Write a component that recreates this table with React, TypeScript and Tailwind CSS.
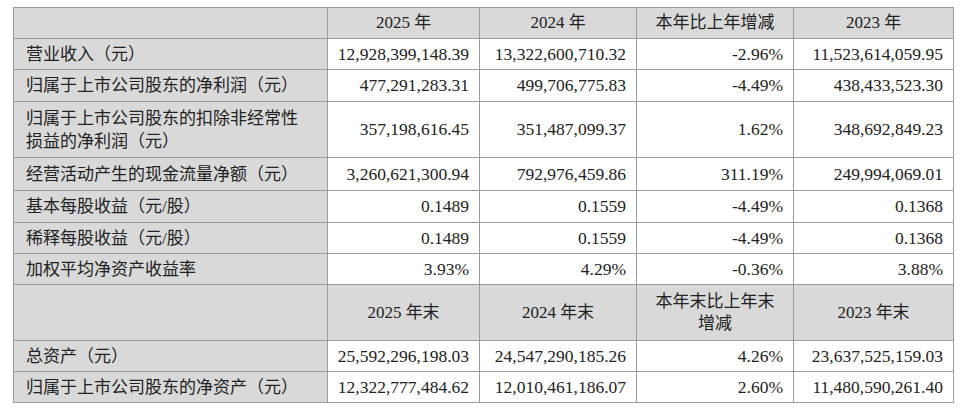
import React from 'react';

type Row = {
    label: React.ReactNode;
    values: string[];
    h: string;
};

const topRows: Row[] = [
    { label: '营业收入（元）', values: ['12,928,399,148.39', '13,322,600,710.32', '-2.96%', '11,523,614,059.95'], h: 'h-[31px]' },
    { label: '归属于上市公司股东的净利润（元）', values: ['477,291,283.31', '499,706,775.83', '-4.49%', '438,433,523.30'], h: 'h-[32px]' },
    {
        label: (
            <>
                归属于上市公司股东的扣除非经常性
                <br />
                损益的净利润（元）
            </>
        ),
        values: ['357,198,616.45', '351,487,099.37', '1.62%', '348,692,849.23'],
        h: 'h-[56px]',
    },
    { label: '经营活动产生的现金流量净额（元）', values: ['3,260,621,300.94', '792,976,459.86', '311.19%', '249,994,069.01'], h: 'h-[33px]' },
    { label: '基本每股收益（元/股）', values: ['0.1489', '0.1559', '-4.49%', '0.1368'], h: 'h-[32px]' },
    { label: '稀释每股收益（元/股）', values: ['0.1489', '0.1559', '-4.49%', '0.1368'], h: 'h-[31px]' },
    { label: '加权平均净资产收益率', values: ['3.93%', '4.29%', '-0.36%', '3.88%'], h: 'h-[31px]' },
];

const bottomRows: Row[] = [
    { label: '总资产（元）', values: ['25,592,296,198.03', '24,547,290,185.26', '4.26%', '23,637,525,159.03'], h: 'h-[31px]' },
    { label: '归属于上市公司股东的净资产（元）', values: ['12,322,777,484.62', '12,010,461,186.07', '2.60%', '11,480,590,261.40'], h: 'h-[31px]' },
];

const cell = 'border border-[#9c9c9c]';
const head = `${cell} bg-[#d9d9d9] text-center font-normal text-[17px] leading-[22px]`;

function BodyRow({ row }: { row: Row }) {
    return (
        <tr className={row.h}>
            <td className={`${cell} bg-[#d9d9d9] pl-[12px] text-left text-[17px] leading-[23px]`}>{row.label}</td>
            {row.values.map((v, i) => (
                <td key={i} className={`${cell} bg-white pr-[10px] text-right text-[17.5px]`}>
                    {v}
                </td>
            ))}
        </tr>
    );
}

export default function App() {
    return (
        <div className="min-h-screen bg-white pl-[13px] pt-[7px]">
            <table
                className="table-fixed border-collapse text-[#222] w-[940px]"
                style={{ fontFamily: '"Liberation Serif", "Noto Sans CJK SC", serif' }}
            >
                <colgroup>
                    <col className="w-[314px]" />
                    <col className="w-[152px]" />
                    <col className="w-[157px]" />
                    <col className="w-[157px]" />
                    <col className="w-[160px]" />
                </colgroup>
                <tbody>
                    <tr className="h-[31px]">
                        <th className={head}></th>
                        <th className={head}>2025 年</th>
                        <th className={head}>2024 年</th>
                        <th className={head}>本年比上年增减</th>
                        <th className={head}>2023 年</th>
                    </tr>
                    {topRows.map((r, i) => (
                        <BodyRow key={i} row={r} />
                    ))}
                    <tr className="h-[56px]">
                        <th className={head}></th>
                        <th className={head}>2025 年末</th>
                        <th className={head}>2024 年末</th>
                        <th className={head}>
                            本年末比上年末
                            <br />
                            增减
                        </th>
                        <th className={head}>2023 年末</th>
                    </tr>
                    {bottomRows.map((r, i) => (
                        <BodyRow key={i} row={r} />
                    ))}
                </tbody>
            </table>
        </div>
    );
}
